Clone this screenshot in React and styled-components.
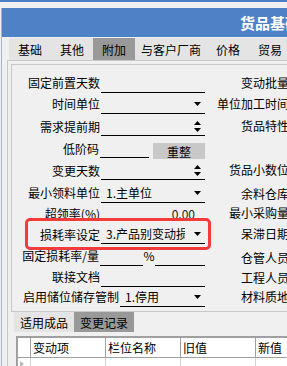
import React from 'react';
import styled, { createGlobalStyle } from 'styled-components';

const GlobalStyle = createGlobalStyle`
  html, body { margin: 0; padding: 0; background: #f0f0f0; }
  body {
    font-family: "Noto Sans CJK SC", "Noto Sans", sans-serif;
    font-size: 12px;
    color: #000;
  }
`;

const Screen = styled.div`
  position: relative;
  width: 287px;
  height: 366px;
  overflow: hidden;
  background: #f0f0f0;
`;

const TopStrip = styled.div`
  height: 2px;
  background: #4a7ec6;
`;

const Window = styled.div`
  margin: 6px 0 0 1px;
  width: 380px;
  border-left: 1px solid #a9b4c2;
  display: flex;
  flex-direction: column;
`;

const TitleBar = styled.div`
  height: 29px;
  background: #4f81c6;
  color: #fff;
  font-weight: bold;
  font-size: 15px;
  display: flex;
  align-items: center;
  padding-left: 238px;
  white-space: nowrap;
`;

const TabStrip = styled.div`
  margin: 1px 0 0 7px;
  height: 22px;
  background: #e4e4e4;
  display: flex;
`;

const Tab = styled.div`
  min-width: 42px;
  box-sizing: border-box;
  padding: 0 6px;
  display: flex;
  align-items: center;
  justify-content: center;
  white-space: nowrap;
  background: ${p => (p.$active ? '#999999' : 'transparent')};
`;

const TabPage = styled.div`
  margin-left: 5px;
  border-top: 1px solid #c8c8c8;
  border-left: 1px solid #c8c8c8;
  padding: 3px 0 0 3px;
`;

const GroupBox = styled.div`
  border: 1px solid #c8c8c8;
  border-right: none;
  padding: 8px 0 4px 0;
  display: grid;
  grid-template-columns: 193px 84px;
  align-items: start;
`;

const LeftCol = styled.div`
  display: flex;
  flex-direction: column;
`;

const Row = styled.div`
  height: ${p => p.$h}px;
  display: flex;
  justify-content: flex-end;
  align-items: center;
`;

const Label = styled.div`
  white-space: nowrap;
  line-height: 14px;
  padding-right: 1px;
`;

const Field = styled.div`
  box-sizing: border-box;
  width: ${p => p.$w}px;
  height: 19px;
  border-bottom: ${p => (p.$plain ? 'none' : '1px solid #000')};
  display: flex;
  align-items: center;
  justify-content: ${p => (p.$right ? 'flex-end' : 'flex-start')};
  padding-left: 5px;
  padding-right: ${p => (p.$right ? 10 : 0)}px;
  flex: none;
`;

const Value = styled.span`
  flex: 1;
  overflow: hidden;
  white-space: nowrap;
  line-height: 14px;
`;

const NumValue = styled.span`
  color: #222;
  line-height: 14px;
`;

const IconBox = styled.span`
  display: flex;
  margin: 0 4px 0 9px;
  flex: none;
`;

const Composite = styled.div`
  width: 105px;
  align-self: stretch;
  display: flex;
  align-items: center;
  flex: none;
`;

const Pct = styled.span`
  width: 12px;
  text-align: center;
  line-height: 14px;
`;

const ResetButton = styled.div`
  align-self: flex-end;
  margin-left: 4px;
  width: 52px;
  height: 16px;
  background: #c8c8c8;
  display: flex;
  align-items: center;
  justify-content: center;
`;

const RightCol = styled.div`
  display: flex;
  flex-direction: column;
`;

const RightLabel = styled.div`
  margin-top: ${p => p.$mt}px;
  height: 14px;
  line-height: 14px;
  text-align: right;
  white-space: nowrap;
`;

const SubTabs = styled.div`
  margin-left: 3px;
  height: 20px;
  display: flex;
`;

const SubTab = styled.div`
  padding: 0 6px;
  display: flex;
  align-items: center;
  white-space: nowrap;
  background: ${p => (p.$active ? '#999999' : '#e4e4e4')};
`;

const Grid = styled.div`
  margin: 4px 0 0 5px;
  border-top: 2px solid #a0a0a0;
  border-left: 2px solid #a0a0a0;
  background: #fff;
`;

const GridRow = styled.div`
  display: flex;
  height: ${p => p.$h}px;
  border-bottom: ${p => (p.$head ? '1px solid #a0a0a0' : 'none')};
`;

const Cell = styled.div`
  box-sizing: border-box;
  width: ${p => p.$w}px;
  flex: none;
  border-right: 1px solid ${p => (p.$light ? '#d4d4d4' : '#a0a0a0')};
  padding-left: 2px;
  display: flex;
  align-items: center;
  white-space: nowrap;
`;

const Highlight = styled.div`
  position: absolute;
  left: 25px;
  top: 218px;
  width: 186px;
  height: 32px;
  box-sizing: border-box;
  border: 3px solid #f23c3c;
  border-radius: 5px;
  pointer-events: none;
`;

const DownArrow = () => (
  <svg width="7" height="4" viewBox="0 0 7 4">
    <polygon points="0,0 7,0 3.5,4" fill="#000" />
  </svg>
);

const SpinArrows = () => (
  <svg width="7" height="11" viewBox="0 0 7 11">
    <polygon points="3.5,0 7,4 0,4" fill="#000" />
    <polygon points="0,7 7,7 3.5,11" fill="#000" />
  </svg>
);

const RowMarker = () => (
  <svg width="4" height="6" viewBox="0 0 4 6">
    <polygon points="0,0 4,3 0,6" fill="#b8b8b8" />
  </svg>
);

const rows = [
  { label: '固定前置天数', h: 20, kind: 'line' },
  { label: '时间单位', h: 22, kind: 'select' },
  { label: '需求提前期', h: 23, kind: 'spin' },
  { label: '低阶码', h: 21, kind: 'reset' },
  { label: '变更天数', h: 23, kind: 'spin' },
  { label: '最小领料单位', h: 22, kind: 'select', value: '1.主单位' },
  { label: '超领率(%)', h: 20, kind: 'number', value: '0.00' },
  { label: '损耗率设定', h: 21, kind: 'select', value: '3.产品别变动损' },
  { label: '固定损耗率/量', h: 22, kind: 'percent' },
  { label: '联接文档', h: 20, kind: 'line' },
  { label: '启用储位储存管制', h: 20, kind: 'select', value: '1.停用', w: 85 },
];

const rightLabels = [
  { text: '变动批量', mt: 3 },
  { text: '单位加工时间', mt: 7 },
  { text: '货品特性', mt: 8 },
  { text: '货品小数位', mt: 30 },
  { text: '余料仓库', mt: 10 },
  { text: '最小采购量', mt: 5 },
  { text: '呆滞日期', mt: 7 },
  { text: '仓管人员', mt: 10 },
  { text: '工程人员', mt: 6 },
  { text: '材料质地', mt: 5 },
];

const tabs = ['基础', '其他', '附加', '与客户厂商', '价格', '贸易'];
const columns = ['变动项', '栏位名称', '旧值', '新值'];

function FieldFor({ row }) {
  const w = row.w || 104;
  switch (row.kind) {
    case 'select':
      return (
        <Field $w={w}>
          <Value>{row.value || ''}</Value>
          <IconBox><DownArrow /></IconBox>
        </Field>
      );
    case 'spin':
      return (
        <Field $w={w}>
          <Value />
          <IconBox><SpinArrows /></IconBox>
        </Field>
      );
    case 'number':
      return (
        <Field $w={w} $plain $right>
          <NumValue>{row.value}</NumValue>
        </Field>
      );
    case 'reset':
      return (
        <Composite>
          <Field $w={49} />
          <ResetButton>重整</ResetButton>
        </Composite>
      );
    case 'percent':
      return (
        <Composite>
          <Field $w={43} />
          <Pct>%</Pct>
          <Field $w={50} />
        </Composite>
      );
    default:
      return <Field $w={w} />;
  }
}

export default function App() {
  return (
    <>
      <GlobalStyle />
      <Screen>
        <TopStrip />
        <Window>
          <TitleBar>货品基础资料</TitleBar>
          <TabStrip>
            {tabs.map(t => (
              <Tab key={t} $active={t === '附加'}>{t}</Tab>
            ))}
          </TabStrip>
          <TabPage>
            <GroupBox>
              <LeftCol>
                {rows.map(r => (
                  <Row key={r.label} $h={r.h}>
                    <Label>{r.label}</Label>
                    <FieldFor row={r} />
                  </Row>
                ))}
              </LeftCol>
              <RightCol>
                {rightLabels.map(l => (
                  <RightLabel key={l.text} $mt={l.mt}>{l.text}</RightLabel>
                ))}
              </RightCol>
            </GroupBox>
            <SubTabs>
              <SubTab>适用成品</SubTab>
              <SubTab $active>变更记录</SubTab>
            </SubTabs>
            <Grid>
              <GridRow $head $h={19}>
                <Cell $w={13} />
                {columns.map(c => (
                  <Cell key={c} $w={75}>{c}</Cell>
                ))}
              </GridRow>
              <GridRow $h={12}>
                <Cell $w={13} $light><RowMarker /></Cell>
                {columns.map(c => (
                  <Cell key={c} $w={75} $light />
                ))}
              </GridRow>
            </Grid>
          </TabPage>
        </Window>
        <Highlight />
      </Screen>
    </>
  );
}
